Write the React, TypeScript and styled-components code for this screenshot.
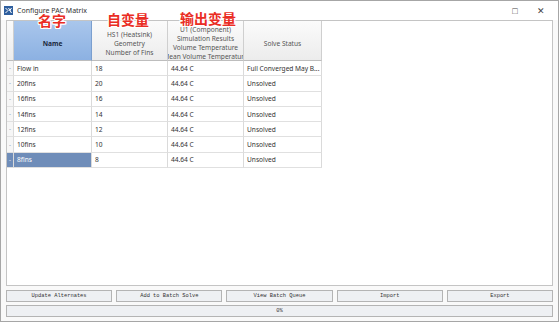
import styled, { createGlobalStyle } from "styled-components";

const Global = createGlobalStyle`
  html, body { margin: 0; padding: 0; background: #ffffff; }
  body { font-family: "Noto Sans", "Liberation Sans", sans-serif; }
`;

const Window = styled.div`
  position: relative;
  box-sizing: border-box;
  width: 559px;
  height: 322px;
  border: 1px solid #a6a6a6;
  background: #f9f9f9;
  display: flex;
  flex-direction: column;
`;

const TitleBar = styled.div`
  height: 21px;
  display: flex;
  align-items: center;
  padding: 0 4px 0 3px;
  background: #ffffff;
  font-size: 7px;
  color: #333;
`;

const AppIcon = styled.svg`
  width: 9px;
  height: 9px;
  margin-right: 4px;
`;

const Title = styled.span`
  flex: 1;
`;

const WinBtn = styled.span`
  width: 26px;
  text-align: center;
  font-size: 9px;
  color: #444;
`;

const Body = styled.div`
  flex: 1;
  display: flex;
  flex-direction: column;
  padding: 0 5px 4px 5px;
`;

const GridPanel = styled.div`
  height: 266px;
  box-sizing: border-box;
  border: 1px solid #c4c4c4;
  background: #ffffff;
`;

const Grid = styled.div`
  display: grid;
  grid-template-columns: 7px 78px 76px 76px 78px;
  grid-template-rows: 40px repeat(7, 15.3px);
  width: max-content;
`;

const HeadCell = styled.div<{ $active?: boolean }>`
  box-sizing: border-box;
  display: flex;
  flex-direction: column;
  align-items: center;
  justify-content: center;
  overflow: hidden;
  white-space: nowrap;
  font-size: 6.6px;
  line-height: 9px;
  padding-top: 5px;
  color: ${({ $active }) => ($active ? "#1c2a40" : "#555")};
  font-weight: ${({ $active }) => ($active ? 700 : 400)};
  border-right: 1px solid ${({ $active }) => ($active ? "#7b9fcf" : "#cfcfcf")};
  border-bottom: 1px solid #bdbdbd;
  background: ${({ $active }) =>
    $active
      ? "linear-gradient(#a9c6ec, #8cb1e2)"
      : "linear-gradient(#fbfbfb, #ececec)"};
`;

const RowHead = styled.div<{ $sel?: boolean }>`
  box-sizing: border-box;
  display: flex;
  align-items: center;
  justify-content: center;
  font-size: 6px;
  color: ${({ $sel }) => ($sel ? "#ffffff" : "#6a85ad")};
  background: ${({ $sel }) => ($sel ? "#6f8db9" : "#f6f6f6")};
  border-right: 1px solid #dadada;
  border-bottom: 1px solid #e0e0e0;
`;

const Cell = styled.div<{ $sel?: boolean }>`
  box-sizing: border-box;
  display: flex;
  align-items: center;
  padding-left: 3px;
  overflow: hidden;
  white-space: nowrap;
  font-size: 6.6px;
  color: ${({ $sel }) => ($sel ? "#ffffff" : "#333")};
  background: ${({ $sel }) => ($sel ? "#6f8db9" : "#ffffff")};
  border-right: 1px solid #dadada;
  border-bottom: 1px solid #e0e0e0;
`;

const ButtonRow = styled.div`
  display: grid;
  grid-template-columns: repeat(5, 1fr);
  gap: 4px;
  margin-top: 4px;
`;

const Button = styled.div`
  height: 12px;
  box-sizing: border-box;
  border: 1px solid #b4b4b4;
  background: #eef0f3;
  display: flex;
  align-items: center;
  justify-content: center;
  font-family: "Liberation Mono", "DejaVu Sans Mono", monospace;
  font-size: 5.4px;
  color: #333;
`;

const Progress = styled.div`
  margin-top: 3px;
  height: 12px;
  box-sizing: border-box;
  border: 1px solid #b4b4b4;
  background: #eef0f3;
  display: flex;
  align-items: center;
  justify-content: center;
  font-family: "Liberation Mono", monospace;
  font-size: 5.4px;
  color: #333;
`;

const Note = styled.span<{ $x: number; $y: number }>`
  position: absolute;
  left: ${({ $x }) => $x}px;
  top: ${({ $y }) => $y}px;
  font-family: "Noto Sans CJK SC", sans-serif;
  font-weight: 700;
  font-size: 14px;
  line-height: 16px;
  color: #ea2d24;
  text-shadow: 1px 0 #fff, -1px 0 #fff, 0 1px #fff, 0 -1px #fff,
    1px 1px #fff, -1px -1px #fff, 1px -1px #fff, -1px 1px #fff;
`;

const rows = [
  { name: "Flow in", fins: "18", temp: "44.64 C", status: "Full Converged May B..." },
  { name: "20fins", fins: "20", temp: "44.64 C", status: "Unsolved" },
  { name: "16fins", fins: "16", temp: "44.64 C", status: "Unsolved" },
  { name: "14fins", fins: "14", temp: "44.64 C", status: "Unsolved" },
  { name: "12fins", fins: "12", temp: "44.64 C", status: "Unsolved" },
  { name: "10fins", fins: "10", temp: "44.64 C", status: "Unsolved" },
  { name: "8fins", fins: "8", temp: "44.64 C", status: "Unsolved" },
];

const buttons = ["Update Alternates", "Add to Batch Solve", "View Batch Queue", "Import", "Export"];

export default function App() {
  return (
    <>
      <Global />
      <Window>
        <TitleBar>
          <AppIcon viewBox="0 0 9 9">
            <rect x="0" y="0" width="9" height="9" fill="#2f5f9e" />
            <path d="M1.5 2 L4 4.5 L1.5 7 M4.5 2 L7.5 7 M7.5 2 L5.5 5" stroke="#fff" strokeWidth="1" fill="none" />
          </AppIcon>
          <Title>Configure PAC Matrix</Title>
          <WinBtn>□</WinBtn>
          <WinBtn>✕</WinBtn>
        </TitleBar>
        <Body>
          <GridPanel>
            <Grid>
              <HeadCell />
              <HeadCell $active>Name</HeadCell>
              <HeadCell>
                <span>HS1 (Heatsink)</span>
                <span>Geometry</span>
                <span>Number of Fins</span>
              </HeadCell>
              <HeadCell>
                <span>U1 (Component)</span>
                <span>Simulation Results</span>
                <span>Volume Temperature</span>
                <span>Mean Volume Temperature</span>
              </HeadCell>
              <HeadCell>Solve Status</HeadCell>
              {rows.map((r, i) => {
                const sel = i === rows.length - 1;
                return [
                  <RowHead key={`h${i}`} $sel={sel}>-</RowHead>,
                  <Cell key={`n${i}`} $sel={sel}>{r.name}</Cell>,
                  <Cell key={`f${i}`}>{r.fins}</Cell>,
                  <Cell key={`t${i}`}>{r.temp}</Cell>,
                  <Cell key={`s${i}`}>{r.status}</Cell>,
                ];
              })}
            </Grid>
          </GridPanel>
          <ButtonRow>
            {buttons.map((b) => (
              <Button key={b}>{b}</Button>
            ))}
          </ButtonRow>
          <Progress>0%</Progress>
        </Body>
        <Note $x={37} $y={11}>名字</Note>
        <Note $x={106} $y={10}>自变量</Note>
        <Note $x={179} $y={9}>输出变量</Note>
      </Window>
    </>
  );
}
